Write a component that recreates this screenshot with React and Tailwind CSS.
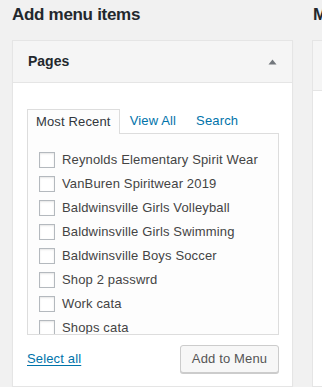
import React from "react";

const items = [
  "Reynolds Elementary Spirit Wear",
  "VanBuren Spiritwear 2019",
  "Baldwinsville Girls Volleyball",
  "Baldwinsville Girls Swimming",
  "Baldwinsville Boys Soccer",
  "Shop 2 passwrd",
  "Work cata",
  "Shops cata",
];

export default function App() {
  return (
    <div
      className="w-[322px] h-[387px] overflow-hidden bg-[#f1f1f1] flex text-[#444] text-[13px] tracking-[0.15px]"
      style={{ fontFamily: '"Liberation Sans", Arial, sans-serif' }}
    >
      <div className="ml-[12px] w-[281px] shrink-0 flex flex-col">
        <h2 className="mt-[5px] h-[20px] leading-[20px] text-[17px] font-bold tracking-[-0.3px] text-[#23282d]">
          Add menu items
        </h2>
        <div className="mt-[15px] border border-[#e5e5e5] bg-white shadow-[0_1px_1px_rgba(0,0,0,0.04)] flex-1">
          <div className="h-[42px] bg-[#f5f5f5] border-b border-[#e5e5e5] flex items-center justify-between pl-[15px] pr-[15px]">
            <span className="text-[14px] font-bold tracking-[0px] text-[#23282d]">Pages</span>
            <svg width="9" height="6" viewBox="0 0 9 6" className="mr-[0px]">
              <path d="M4.5 0.5 L8.5 5.5 L0.5 5.5 Z" fill="#72777c" />
            </svg>
          </div>
          <div className="pt-[26px] pl-[14px]">
            <div className="w-[252px]">
              <div className="flex h-[25px] -mb-px relative z-10">
                <div className="h-[25px] px-[8px] border border-b-0 border-[#dddddd] bg-[#fdfdfd] flex items-center text-[#32373c]">
                  Most Recent
                </div>
                <div className="h-[24px] px-[10px] flex items-center text-[#0073aa]">View All</div>
                <div className="h-[24px] px-[10px] flex items-center text-[#0073aa]">Search</div>
              </div>
              <div className="h-[202px] border border-[#dddddd] bg-[#fdfdfd] overflow-hidden pt-[14px] pl-[11px]">
                {items.map((t) => (
                  <div key={t} className="h-[24px] flex items-center">
                    <span className="w-[16px] h-[16px] border border-[#b4b9be] bg-white shadow-[inset_0_1px_2px_rgba(0,0,0,0.1)] shrink-0" />
                    <span className="ml-[7px] whitespace-nowrap">{t}</span>
                  </div>
                ))}
              </div>
              <div className="mt-[10px] flex items-center justify-between">
                <a className="underline text-[#0073aa] underline-offset-[2px]">Select all</a>
                <button className="w-[99px] h-[28px] border border-[#cccccc] bg-[#f7f7f7] rounded-[3px] shadow-[0_1px_0_#cccccc] text-[#555] text-[13px] flex items-center justify-center">
                  Add to Menu
                </button>
              </div>
            </div>
          </div>
        </div>
      </div>
      <div className="ml-[19px] w-[200px] shrink-0 flex flex-col">
        <h2 className="mt-[5px] h-[20px] leading-[20px] text-[17px] font-bold tracking-[-0.3px] text-[#23282d] ml-[1px]">
          Menu structure
        </h2>
        <div className="mt-[15px] border border-[#e5e5e5] bg-white flex-1">
          <div className="h-[50px] bg-[#f5f5f5] border-b border-[#e5e5e5]" />
        </div>
      </div>
    </div>
  );
}
